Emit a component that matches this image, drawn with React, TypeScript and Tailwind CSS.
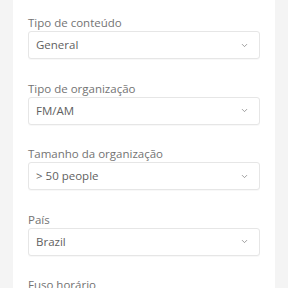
import { ChevronDown } from "lucide-react";

const FIELDS = [
  { label: "Tipo de conteúdo", value: "General" },
  { label: "Tipo de organização", value: "FM/AM" },
  { label: "Tamanho da organização", value: "> 50 people" },
  { label: "País", value: "Brazil" },
  { label: "Fuso horário", value: "(GMT-03:00) Brasilia" },
];

export default function App() {
  return (
    <div className="h-[288px] overflow-hidden bg-[#f4f4f4] px-[13px] font-['Open_Sans',sans-serif]">
      <div className="flex h-full flex-col gap-[22.5px] bg-white px-[15px] pt-[16px]">
        {FIELDS.map((f) => (
          <div key={f.label} className="flex flex-col">
            <label className="mb-[1px] text-[11.5px] leading-[14px] text-[#737373]">{f.label}</label>
            <div className="flex h-[28px] items-center justify-between rounded-[3px] border border-[#e6e6e6] bg-white pl-[7px] pr-[10px] shadow-[0_1px_1px_rgba(0,0,0,0.03)]">
              <span className="text-[11.5px] text-[#5f5f5f]">{f.value}</span>
              <ChevronDown className="h-[9px] w-[9px] text-[#808080]" strokeWidth={2} />
            </div>
          </div>
        ))}
      </div>
    </div>
  );
}
